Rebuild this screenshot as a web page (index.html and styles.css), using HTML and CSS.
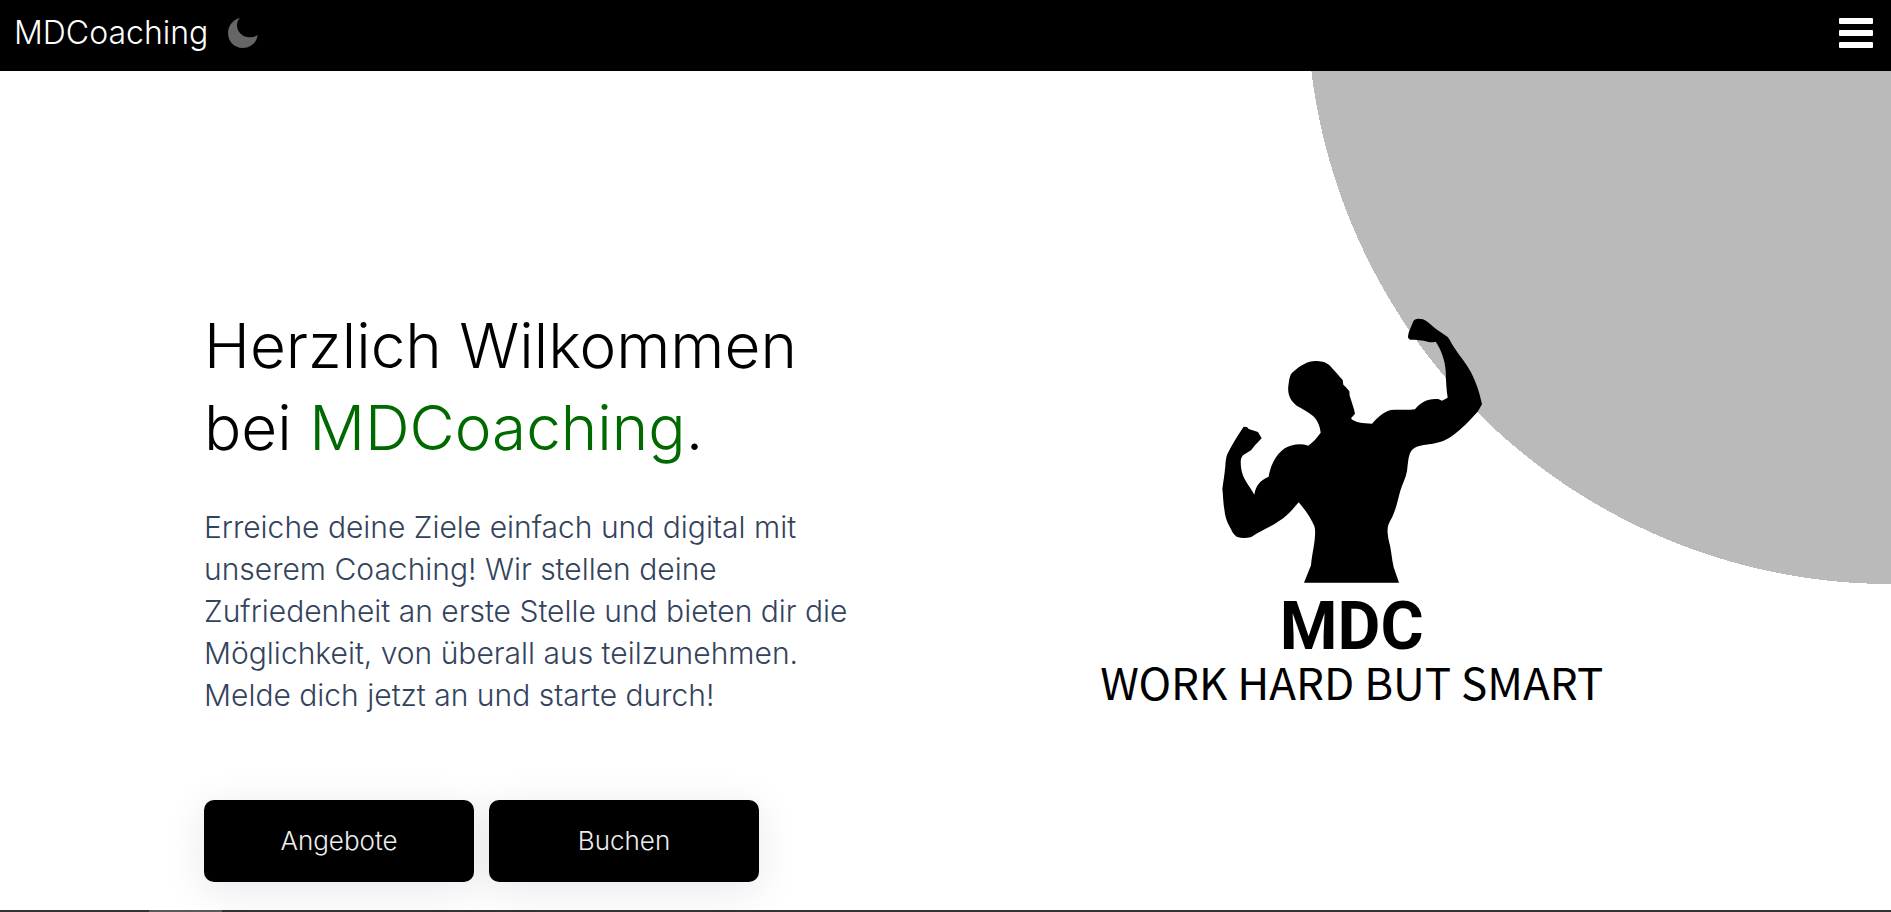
FILE: index.html
```html
<!DOCTYPE html>
<html lang="de">
<head>
<meta charset="utf-8">
<meta name="viewport" content="width=device-width, initial-scale=1">
<title>MDCoaching</title>
<link rel="stylesheet" href="styles.css">
</head>
<body class="page">
<header class="navbar">
  <a class="brand" href="#">MDCoaching</a>
  <button class="icon-button" type="button" aria-label="Dunkelmodus">
    <svg class="moon" viewBox="0 0 90 90" aria-hidden="true"><path d="M36 0C14 5 0 24 0 45c0 26 19 45 44 45 24 0 42-16 45-39-8 5-16 7-24 7C44 58 27 42 27 21c0-8 3-15 9-21z"/></svg>
  </button>
  <button class="icon-button menu" type="button" aria-label="Menü">
    <svg class="bars" viewBox="0 0 34 30" aria-hidden="true"><rect width="34" height="6" rx="1"/><rect y="12" width="34" height="6" rx="1"/><rect y="24" width="34" height="6" rx="1"/></svg>
  </button>
</header>
<main class="hero">
  <section class="intro">
    <h1 class="title">Herzlich Wilkommen bei <span class="accent">MDCoaching</span>.</h1>
    <p class="lead">Erreiche deine Ziele einfach und digital mit unserem Coaching! Wir stellen deine Zufriedenheit an erste Stelle und bieten dir die Möglichkeit, von überall aus teilzunehmen. Melde dich jetzt an und starte durch!</p>
    <div class="actions">
      <a class="button" href="#angebote">Angebote</a>
      <a class="button" href="#buchen">Buchen</a>
    </div>
  </section>
  <figure class="logo">
    <svg class="athlete" viewBox="67 56 780 795" role="img" aria-label="Bodybuilder">
      <path d="M313 850L334 798C337 765 344 740 346 710C347 695 346 688 344 680C333 655 315 629 297 609C280 629 260 653 238 665C212 684 185 692 155 713C140 717 125 717 111 712C101 706 96 693 90 682C80 665 76 650 74 630C70 605 70 580 68 570C71 545 75 525 77 500C78 485 80 468 85 460C97 438 110 415 123 396L132 382L142 383L147 389L175 398L186 417L166 438L154 453L130 468C122 476 122 490 125 510C129 538 147 557 164 586C168 560 180 543 207 532C213 490 240 445 278 438C292 434 310 434 326 439C340 429 350 417 363 400C361 380 353 361 340 350C326 337 310 330 291 319C273 305 263 286 266 260C269 240 270 227 279 219C300 199 325 185 347 185C362 186 377 186 391 199C400 210 412 221 420 232L429 242L431 256L439 264L449 276L450 289C455 306 463 325 466 343L454 357C463 369 490 373 517 373C533 355 552 337 574 332C600 330 624 333 646 330C661 311 682 299 706 299L716 299L727 304L744 295C740 270 739 245 738 214C736 182 724 150 708 127C698 129 691 129 684 127C668 122 650 121 631 121L625 115C625 103 629 93 633 85L640 68C644 58 654 56 670 60C682 65 693 76 708 88L744 113C752 123 756 134 764 145C781 171 799 191 814 219C831 253 840 282 847 315L834 337C812 360 785 391 758 409C735 426 713 431 687 435C665 439 651 440 639 450C626 462 626 485 622 515C618 537 609 552 602 574C594 603 588 635 575 658C561 680 562 695 567 722C575 750 576 778 582 804L598 850Z"/>
    </svg>
    <figcaption class="caption"><span class="mark">MDC</span><span class="slogan">WORK HARD BUT SMART</span></figcaption>
  </figure>
</main>
<div class="next-section" aria-hidden="true"><div class="next-section-tab"></div></div>
</body>
</html>
```
FILE: styles.css
```css
*, *::before, *::after { box-sizing: border-box; }

.page {
  display: flex;
  flex-direction: column;
  min-height: 100vh;
  margin: 0;
  font-family: Inter, "Liberation Sans", sans-serif;
  font-weight: 300;
  color: #000;
  background: radial-gradient(circle at top right, #bababa 584px, #fff 584px) no-repeat;
}

.navbar {
  display: flex;
  align-items: center;
  gap: 20px;
  height: 71px;
  padding: 0 18px 5px 14px;
  background: #000;
}

.brand {
  font-size: 32px;
  line-height: 40px;
  color: #fff;
  text-decoration: none;
}

.icon-button {
  display: flex;
  padding: 0;
  border: 0;
  background: none;
  cursor: pointer;
}

.menu { margin-left: auto; }
.moon { width: 30px; height: 30px; fill: #666; }
.bars { width: 34px; height: 30px; fill: #fff; }

.hero {
  display: grid;
  flex: 1;
  grid-template-columns: 1fr 1fr;
  align-items: start;
  gap: 142px;
  padding: 234px 204px 27px;
}

.title {
  margin: 0 0 37px;
  font-size: 62px;
  font-weight: 300;
  line-height: 82px;
}

.accent { color: #006a00; }

.lead {
  max-width: 660px;
  margin: 0 0 84px;
  font-size: 30px;
  line-height: 42px;
  color: #34435c;
}

.actions { display: flex; gap: 15px; }

.button {
  display: flex;
  align-items: center;
  justify-content: center;
  width: 270px;
  height: 82px;
  padding-bottom: 2px;
  border-radius: 10px;
  background: #000;
  box-shadow: 0 8px 40px rgba(20, 30, 60, 0.1);
  font-size: 26px;
  color: #eee;
  text-decoration: none;
}

.logo {
  display: flex;
  flex-direction: column;
  align-items: center;
  margin: 0;
  padding-top: 13px;
}

.athlete { width: 260px; height: 265px; }

.caption {
  display: flex;
  flex-direction: column;
  align-items: center;
  padding-top: 11px;
  white-space: nowrap;
}

.mark {
  font-family: Roboto, sans-serif;
  font-size: 66px;
  font-weight: 700;
  line-height: 66px;
}

.slogan {
  font-family: "Noto Sans CJK SC", sans-serif;
  font-size: 44px;
  font-weight: 400;
  line-height: 42px;
}

.next-section { height: 2px; padding-left: 149px; background: #333; }
.next-section-tab { width: 73px; height: 2px; background: #5a5a5a; }
```
